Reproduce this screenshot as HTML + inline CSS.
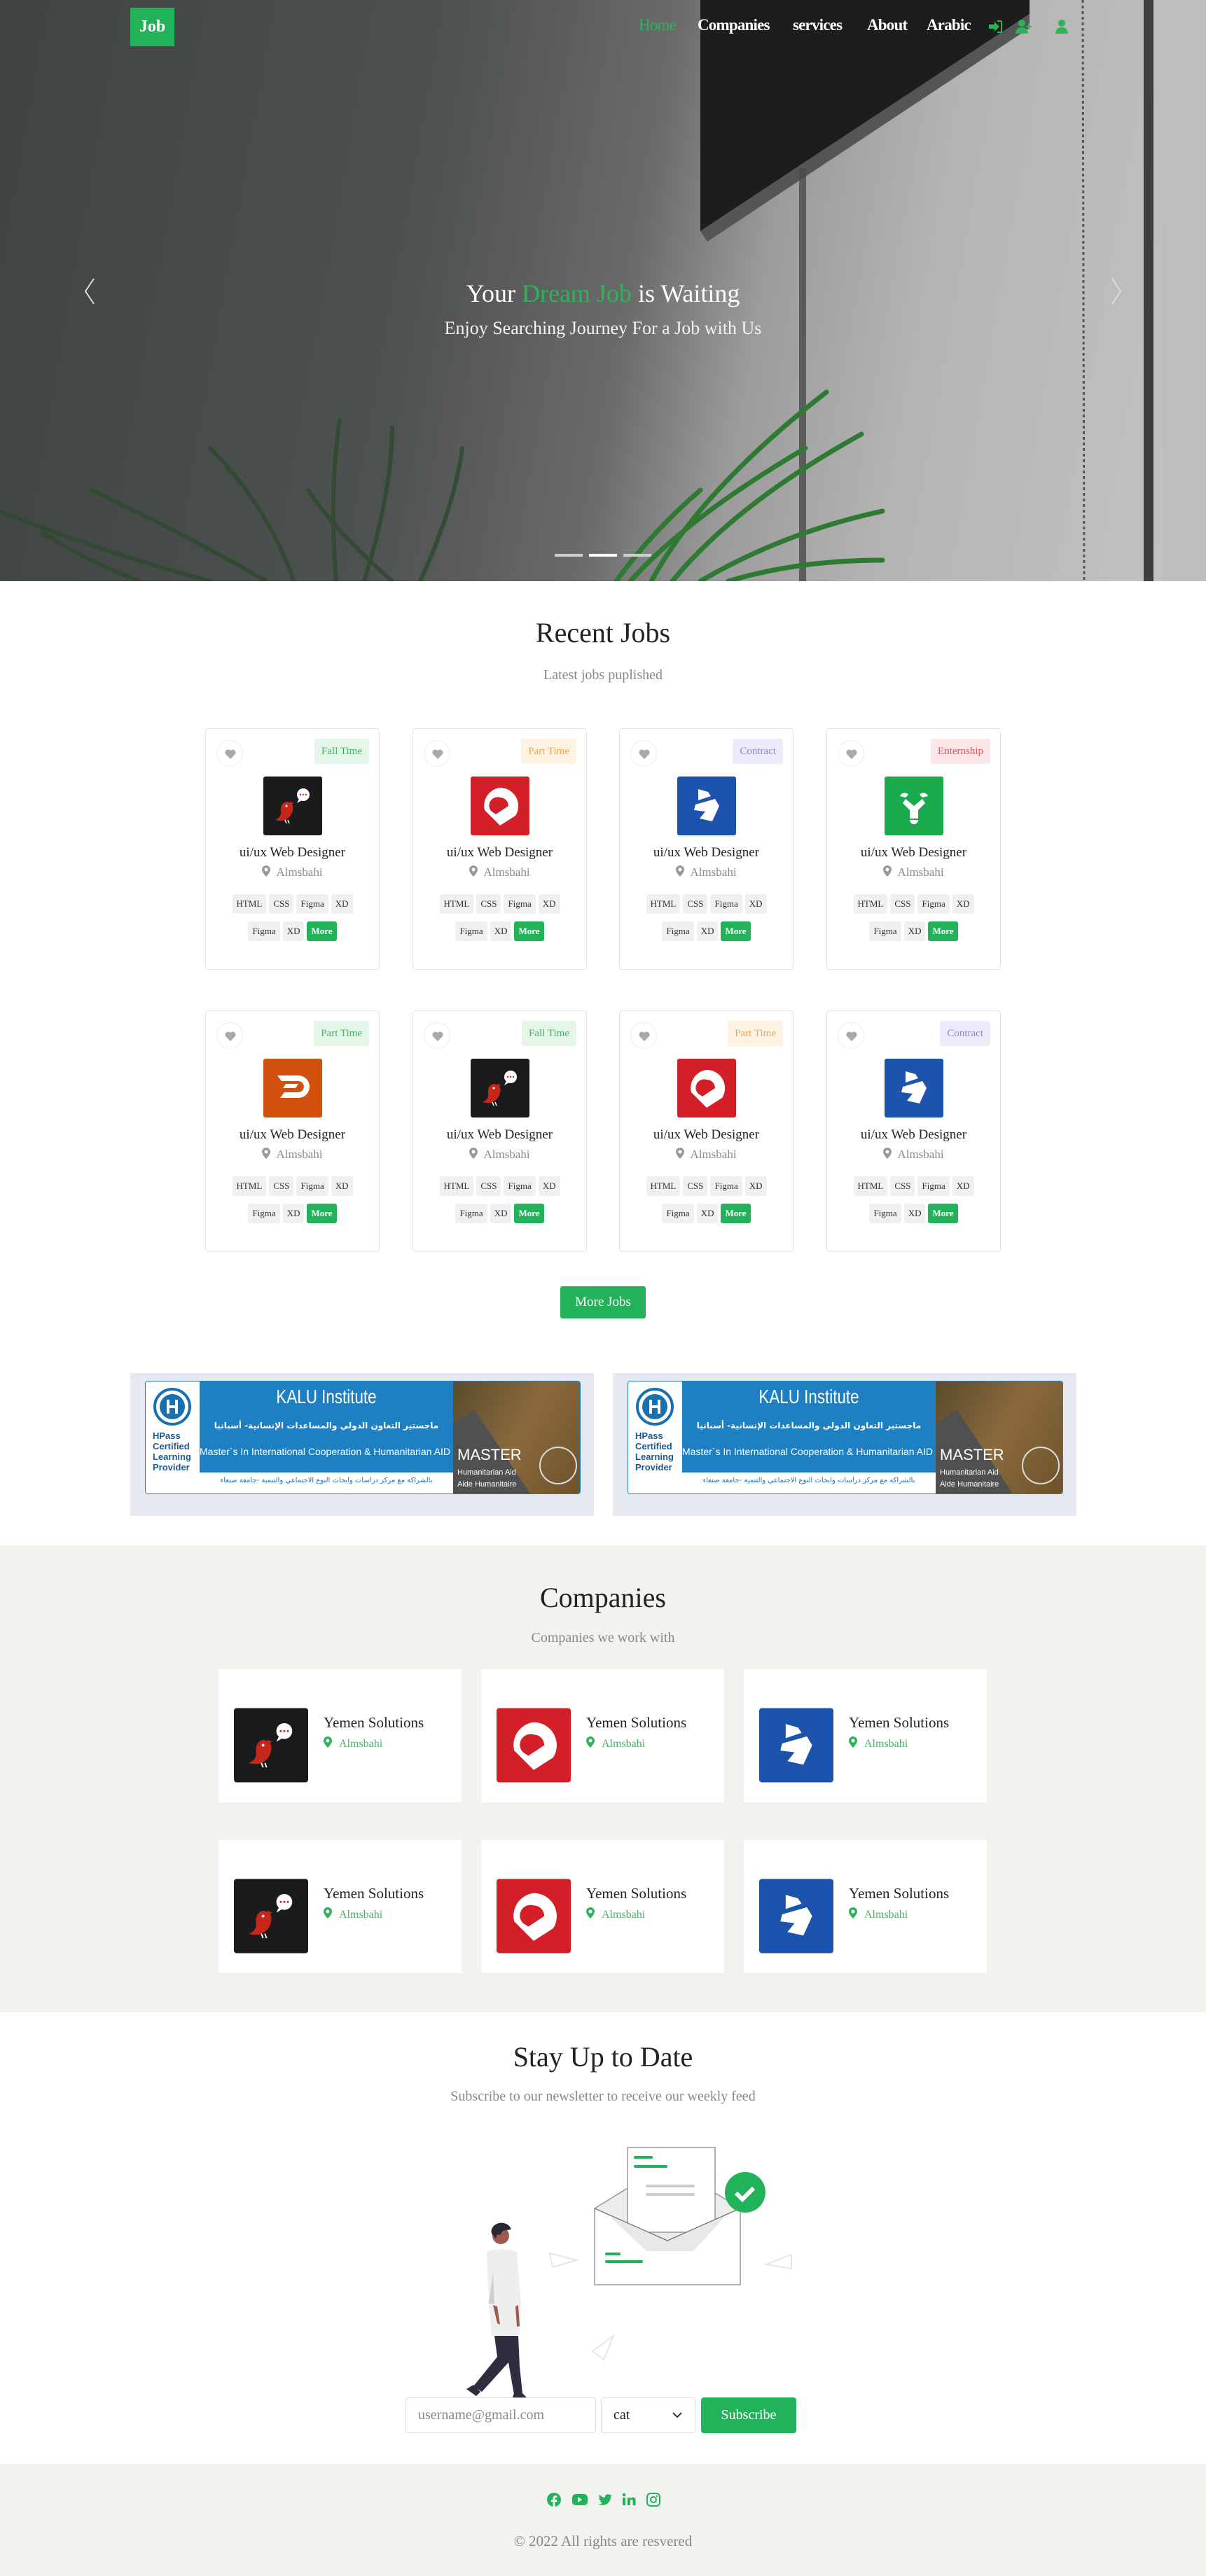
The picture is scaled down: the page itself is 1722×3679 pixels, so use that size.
<!DOCTYPE html>
<html><head><meta charset="utf-8">
<style>
*{box-sizing:border-box;margin:0;padding:0}
body{width:1722px;height:3679px;position:relative;background:#fff;font-family:"Liberation Serif",serif;color:#222;overflow:hidden}
.a{position:absolute}
.hero{left:0;top:0;width:1722px;height:830px;overflow:hidden;background:linear-gradient(100deg,#3f4443 0%,#4d5150 35%,#6a6a6a 52%,#9b9b9b 62%,#b4b4b4 75%,#c4c4c4 100%)}
.nav a{position:absolute;top:23px;font-size:23px;font-weight:bold;color:#fff;text-decoration:none;letter-spacing:-0.8px}
.card{position:absolute;width:249px;height:345px;border:1px solid #e4e4e4;border-radius:4px;background:#fff}
.heart{position:absolute;left:15px;top:16px;width:38px;height:38px;border:1px solid #ececec;border-radius:50%}
.heart svg{position:absolute;left:11px;top:12px}
.badge{position:absolute;right:14px;top:14px;height:36px;line-height:36px;padding:0 10px;font-size:15px;border-radius:3px}
.g{background:#e3f6e8;color:#4cae6a}.o{background:#fff3e3;color:#f0a35a}.p{background:#ecebfb;color:#8b86d0}.r{background:#fde6e8;color:#d45a66}
.lg{position:absolute;left:82px;top:68px;width:84px;height:84px}
.jt{position:absolute;left:0;width:100%;top:166px;text-align:center;font-size:19px;color:#222}
.loc{position:absolute;left:0;width:100%;top:195px;text-align:center;font-size:17px;color:#8a8a8a}
.tags{position:absolute;left:0;width:100%;text-align:center;font-size:13px}
.tags span{display:inline-block;height:28px;line-height:28px;padding:0 6px;background:#eef0f2;color:#333;border-radius:3px;margin:0 2px}
.tags span.m{background:#22b35a;color:#fff;font-weight:bold}
.cc{position:absolute;width:347px;height:190px;background:#fff}
.cc .l{position:absolute;left:22px;top:55px;width:106px;height:107px}
.cc .n{position:absolute;left:150px;top:64px;font-size:21px;color:#222}
.cc .p2{position:absolute;left:150px;top:96px;font-size:16px;color:#4cae6a}
.ad{position:absolute;width:662px;height:204px;background:#e5eaf0}
.ban{position:absolute;left:21px;top:11px;width:622px;height:162px;background:#fff;border-radius:4px;overflow:hidden;border:1px solid #1e7fc2}
.nw{white-space:nowrap}
</style></head><body>

<div class="a hero">
 <svg class="a" style="left:0;top:0" width="1722" height="830">
  <polygon points="1000,0 1470,0 1470,20 1000,330" fill="#1c1d1c"/>
  <polygon points="1000,330 1470,20 1470,40 1010,345" fill="#555"/>
  <rect x="1141" y="240" width="10" height="590" fill="#4a4a4a" opacity=".8"/>
  <line x1="1546" y1="0" x2="1548" y2="830" stroke="#555" stroke-width="3" stroke-dasharray="4 4"/>
  <rect x="1633" y="0" width="14" height="830" fill="#3f3f3f"/>
  <rect x="1660" y="0" width="62" height="830" fill="#bdbdbd"/>
  <g stroke="#2f4a2f" stroke-width="6" fill="none" stroke-linecap="round" opacity=".85">
   <path d="M480 830 Q470 700 485 600"/><path d="M520 830 Q560 700 560 610"/><path d="M420 830 Q380 720 300 640"/>
   <path d="M380 830 Q260 760 130 700"/><path d="M300 830 Q150 790 0 730"/><path d="M600 830 Q650 720 660 640"/>
   <path d="M200 830 Q120 800 60 760"/><path d="M560 830 Q480 760 440 700"/>
  </g>
  <g stroke="#2e7a33" stroke-width="7" fill="none" stroke-linecap="round">
   <path d="M930 830 Q1000 700 1180 560"/><path d="M960 830 Q1050 720 1230 620"/><path d="M900 830 Q980 740 1150 640"/>
   <path d="M1000 830 Q1120 760 1260 730"/><path d="M880 830 Q930 760 1000 700"/><path d="M1040 830 Q1140 800 1260 800"/>
  </g>
 </svg>
 <div class="a" style="left:186px;top:11px;width:63px;height:55px;background:#22b35a;color:#fff;font-size:24px;font-weight:bold;text-align:center;line-height:55px">Job</div>
 <div class="nav">
  <a style="left:912px;color:#2db35a;font-weight:normal">Home</a>
  <a style="left:996px">Companies</a>
  <a style="left:1132px">services</a>
  <a style="left:1238px">About</a>
  <a style="left:1323px">Arabic</a>
 </div>
 <svg class="a" style="left:1410px;top:26px" width="120" height="24" fill="#2db35a">
  <path d="M2 9h8V5l7 7-7 7v-4H2z"/><path d="M14 3h5a2 2 0 0 1 2 2v14a2 2 0 0 1-2 2h-5v-2h5V5h-5z"/>
  <circle cx="49" cy="7" r="5"/><path d="M40 22c0-6 4-9 9-9s9 3 9 9z"/><path d="M58 8h2v3h3v2h-3v3h-2v-3h-3v-2h3z"/>
  <circle cx="106" cy="7" r="5"/><path d="M97 22c0-6 4-9 9-9s9 3 9 9z"/>
 </svg>
 <svg class="a" style="left:118px;top:396px" width="20" height="40"><path d="M16 2 L4 20 L16 38" stroke="#ddd" stroke-width="2" fill="none"/></svg>
 <svg class="a" style="left:1584px;top:396px" width="20" height="40"><path d="M4 2 L16 20 L4 38" stroke="#ddd" stroke-width="2" fill="none"/></svg>
 <div class="a" style="left:0;width:1722px;top:398px;text-align:center;font-size:36px;color:#fff">Your <span style="color:#2db35a">Dream Job</span> is Waiting</div>
 <div class="a" style="left:0;width:1722px;top:454px;text-align:center;font-size:26px;color:#f2f2f2">Enjoy Searching Journey For a Job with Us</div>
 <div class="a" style="left:792px;top:791px;width:40px;height:4px;background:#cfcfcf"></div>
 <div class="a" style="left:841px;top:791px;width:40px;height:4px;background:#fff"></div>
 <div class="a" style="left:890px;top:791px;width:40px;height:4px;background:#cfcfcf"></div>
</div>

<div class="a" style="left:0;width:1722px;top:880px;text-align:center;font-size:40px;color:#222">Recent Jobs</div>
<div class="a" style="left:0;width:1722px;top:953px;text-align:center;font-size:20px;color:#888">Latest jobs puplished</div>

<svg width="0" height="0" style="position:absolute">
 <defs>
  <symbol id="bird" viewBox="0 0 84 84"><rect width="84" height="84" rx="3" fill="#1b1b1d"/><path d="M34 36c-6 0-10 6-9 14 1 6-3 10-8 12 6 2 14 2 20-4 6-6 7-16 3-20z" fill="#c6271a"/><path d="M38 36l6 2-5 2z" fill="#c6271a"/><circle cx="33" cy="42" r="1.5" fill="#fff"/><path d="M31 62l2 5M35 62l2 5" stroke="#fff" stroke-width="1.5"/><circle cx="57" cy="26" r="9" fill="#fff"/><path d="M51 32l-3 6 7-4z" fill="#fff"/><circle cx="53" cy="26" r="1.2" fill="#c6271a"/><circle cx="57" cy="26" r="1.2" fill="#c6271a"/><circle cx="61" cy="26" r="1.2" fill="#c6271a"/></symbol>
  <symbol id="red" viewBox="0 0 84 84"><rect width="84" height="84" rx="3" fill="#d21f28"/><path d="M42 16a26 26 0 0 1 22 40L42 70 20 48a26 26 0 0 1 22-32z" fill="#fff"/><path d="M42 30a12 12 0 0 1 12 12L36 54l-6-4a12 12 0 0 1 12-20z" fill="#d21f28"/></symbol>
  <symbol id="blue" viewBox="0 0 84 84"><rect width="84" height="84" rx="3" fill="#1b53ad"/><path d="M30 18l14 4 4 6-18 6zM26 40l28-8 6 10-10 22-18-4 8-10-16-2z" fill="#fff"/></symbol>
  <symbol id="green" viewBox="0 0 84 84"><rect width="84" height="84" rx="3" fill="#1aaa4e"/><path d="M22 28a7 7 0 0 1 12-2l-4 4zM62 28a7 7 0 0 0-12-2l4 4zM30 32l12 10 12-10 4 6-10 10v12H36V48L26 38z" fill="#fff"/><path d="M36 62h12a6 6 0 0 1-12 0z" fill="#fff"/></symbol>
  <symbol id="orange" viewBox="0 0 84 84"><rect width="84" height="84" rx="3" fill="#d4500f"/><path d="M20 24h30a16 16 0 0 1 0 32H24l6-8h20a8 8 0 0 0 0-16H26zM32 36h18l-4 6H28z" fill="#fff"/></symbol>
  <symbol id="hrt" viewBox="0 0 16 14"><path d="M8 14L1.5 7.5A4 4 0 0 1 8 2a4 4 0 0 1 6.5 5.5z" fill="#a8a8ad"/></symbol>
  <symbol id="pin" viewBox="0 0 12 16"><path d="M6 0a6 6 0 0 1 6 6c0 4-6 10-6 10S0 10 0 6a6 6 0 0 1 6-6zm0 3.5a2.5 2.5 0 1 0 0 5 2.5 2.5 0 0 0 0-5z"/></symbol>
 </defs>
</svg>

<div class="card" style="left:293px;top:1040px"><div class="heart"><svg width="16" height="14"><use href="#hrt"/></svg></div><div class="badge g">Fall Time</div><svg class="lg"><use href="#bird"/></svg><div class="jt">ui/ux Web Designer</div><div class="loc"><svg width="12" height="16" fill="#999" style="vertical-align:-1px;margin-right:8px"><use href="#pin"/></svg>Almsbahi</div><div class="tags" style="top:236px"><span>HTML</span><span>CSS</span><span>Figma</span><span>XD</span></div><div class="tags" style="top:275px"><span>Figma</span><span>XD</span><span class="m">More</span></div></div>
<div class="card" style="left:589px;top:1040px"><div class="heart"><svg width="16" height="14"><use href="#hrt"/></svg></div><div class="badge o">Part Time</div><svg class="lg"><use href="#red"/></svg><div class="jt">ui/ux Web Designer</div><div class="loc"><svg width="12" height="16" fill="#999" style="vertical-align:-1px;margin-right:8px"><use href="#pin"/></svg>Almsbahi</div><div class="tags" style="top:236px"><span>HTML</span><span>CSS</span><span>Figma</span><span>XD</span></div><div class="tags" style="top:275px"><span>Figma</span><span>XD</span><span class="m">More</span></div></div>
<div class="card" style="left:884px;top:1040px"><div class="heart"><svg width="16" height="14"><use href="#hrt"/></svg></div><div class="badge p">Contract</div><svg class="lg"><use href="#blue"/></svg><div class="jt">ui/ux Web Designer</div><div class="loc"><svg width="12" height="16" fill="#999" style="vertical-align:-1px;margin-right:8px"><use href="#pin"/></svg>Almsbahi</div><div class="tags" style="top:236px"><span>HTML</span><span>CSS</span><span>Figma</span><span>XD</span></div><div class="tags" style="top:275px"><span>Figma</span><span>XD</span><span class="m">More</span></div></div>
<div class="card" style="left:1180px;top:1040px"><div class="heart"><svg width="16" height="14"><use href="#hrt"/></svg></div><div class="badge r">Enternship</div><svg class="lg"><use href="#green"/></svg><div class="jt">ui/ux Web Designer</div><div class="loc"><svg width="12" height="16" fill="#999" style="vertical-align:-1px;margin-right:8px"><use href="#pin"/></svg>Almsbahi</div><div class="tags" style="top:236px"><span>HTML</span><span>CSS</span><span>Figma</span><span>XD</span></div><div class="tags" style="top:275px"><span>Figma</span><span>XD</span><span class="m">More</span></div></div>
<div class="card" style="left:293px;top:1443px"><div class="heart"><svg width="16" height="14"><use href="#hrt"/></svg></div><div class="badge g">Part Time</div><svg class="lg"><use href="#orange"/></svg><div class="jt">ui/ux Web Designer</div><div class="loc"><svg width="12" height="16" fill="#999" style="vertical-align:-1px;margin-right:8px"><use href="#pin"/></svg>Almsbahi</div><div class="tags" style="top:236px"><span>HTML</span><span>CSS</span><span>Figma</span><span>XD</span></div><div class="tags" style="top:275px"><span>Figma</span><span>XD</span><span class="m">More</span></div></div>
<div class="card" style="left:589px;top:1443px"><div class="heart"><svg width="16" height="14"><use href="#hrt"/></svg></div><div class="badge g">Fall Time</div><svg class="lg"><use href="#bird"/></svg><div class="jt">ui/ux Web Designer</div><div class="loc"><svg width="12" height="16" fill="#999" style="vertical-align:-1px;margin-right:8px"><use href="#pin"/></svg>Almsbahi</div><div class="tags" style="top:236px"><span>HTML</span><span>CSS</span><span>Figma</span><span>XD</span></div><div class="tags" style="top:275px"><span>Figma</span><span>XD</span><span class="m">More</span></div></div>
<div class="card" style="left:884px;top:1443px"><div class="heart"><svg width="16" height="14"><use href="#hrt"/></svg></div><div class="badge o">Part Time</div><svg class="lg"><use href="#red"/></svg><div class="jt">ui/ux Web Designer</div><div class="loc"><svg width="12" height="16" fill="#999" style="vertical-align:-1px;margin-right:8px"><use href="#pin"/></svg>Almsbahi</div><div class="tags" style="top:236px"><span>HTML</span><span>CSS</span><span>Figma</span><span>XD</span></div><div class="tags" style="top:275px"><span>Figma</span><span>XD</span><span class="m">More</span></div></div>
<div class="card" style="left:1180px;top:1443px"><div class="heart"><svg width="16" height="14"><use href="#hrt"/></svg></div><div class="badge p">Contract</div><svg class="lg"><use href="#blue"/></svg><div class="jt">ui/ux Web Designer</div><div class="loc"><svg width="12" height="16" fill="#999" style="vertical-align:-1px;margin-right:8px"><use href="#pin"/></svg>Almsbahi</div><div class="tags" style="top:236px"><span>HTML</span><span>CSS</span><span>Figma</span><span>XD</span></div><div class="tags" style="top:275px"><span>Figma</span><span>XD</span><span class="m">More</span></div></div>

<div class="a" style="left:800px;top:1837px;width:122px;height:46px;background:#22b35a;border-radius:3px;color:#fff;font-size:19px;text-align:center;line-height:46px">More Jobs</div>

<div class="ad" style="left:186px;top:1961px">
 <div class="ban">
  <div class="a" style="left:0;top:0;width:77px;height:160px;background:#fff">
   <svg class="a" style="left:10px;top:8px" width="56" height="56"><circle cx="28" cy="28" r="25" fill="none" stroke="#1a6fae" stroke-width="4"/><circle cx="28" cy="28" r="18" fill="#1a6fae"/><path d="M22 18v20M34 18v20M22 28h12" stroke="#fff" stroke-width="4"/></svg>
   <div class="a" style="left:10px;top:70px;font:bold 13px/15px 'Liberation Sans',sans-serif;color:#1a5a8e">HPass<br>Certified<br>Learning<br>Provider</div>
  </div>
  <div class="a" style="left:77px;top:0;width:362px;height:130px;background:#1e7fc2;overflow:hidden">
   <div class="a nw" style="left:0;width:362px;top:6px;text-align:center;font:28px 'Liberation Sans Narrow','Liberation Sans',sans-serif;color:#fff;transform:scaleX(.8)">KALU Institute</div>
   <div class="a nw" style="left:0;width:362px;top:56px;text-align:center;font:bold 12px 'DejaVu Sans',sans-serif;color:#fff">ماجستير التعاون الدولي والمساعدات الإنسانية- أسبانيا</div>
   <div class="a nw" style="left:0;width:362px;top:92px;text-align:center;font:14px 'Liberation Sans Narrow','Liberation Sans',sans-serif;color:#fff">Master`s In International Cooperation &amp; Humanitarian AID - Spain</div>
  </div>
  <div class="a nw" style="left:77px;top:136px;width:362px;text-align:center;font:10px 'DejaVu Sans',sans-serif;color:#1e6fb0;overflow:hidden">بالشراكة مع مركز دراسات وابحاث النوع الاجتماعي والتنمية -جامعة صنعاء</div>
  <div class="a" style="left:439px;top:0;width:183px;height:160px;background:linear-gradient(120deg,#5a4a2e,#8a6a3c 50%,#6e522c)">
   <svg class="a" style="left:0;top:0" width="183" height="160"><polygon points="0,60 30,40 110,160 0,160" fill="#505050"/><circle cx="150" cy="120" r="26" fill="none" stroke="#ddd" stroke-width="2"/></svg>
   <div class="a" style="left:6px;top:92px;font:22px 'Liberation Sans Narrow',sans-serif;color:#fff">MASTER</div>
   <div class="a" style="left:6px;top:122px;font:11px/17px 'Liberation Sans Narrow',sans-serif;color:#fff">Humanitarian Aid<br>Aide Humanitaire</div>
  </div>
 </div>
</div>
<div class="ad" style="left:875px;top:1961px">
 <div class="ban">
  <div class="a" style="left:0;top:0;width:77px;height:160px;background:#fff">
   <svg class="a" style="left:10px;top:8px" width="56" height="56"><circle cx="28" cy="28" r="25" fill="none" stroke="#1a6fae" stroke-width="4"/><circle cx="28" cy="28" r="18" fill="#1a6fae"/><path d="M22 18v20M34 18v20M22 28h12" stroke="#fff" stroke-width="4"/></svg>
   <div class="a" style="left:10px;top:70px;font:bold 13px/15px 'Liberation Sans',sans-serif;color:#1a5a8e">HPass<br>Certified<br>Learning<br>Provider</div>
  </div>
  <div class="a" style="left:77px;top:0;width:362px;height:130px;background:#1e7fc2;overflow:hidden">
   <div class="a nw" style="left:0;width:362px;top:6px;text-align:center;font:28px 'Liberation Sans Narrow','Liberation Sans',sans-serif;color:#fff;transform:scaleX(.8)">KALU Institute</div>
   <div class="a nw" style="left:0;width:362px;top:56px;text-align:center;font:bold 12px 'DejaVu Sans',sans-serif;color:#fff">ماجستير التعاون الدولي والمساعدات الإنسانية- أسبانيا</div>
   <div class="a nw" style="left:0;width:362px;top:92px;text-align:center;font:14px 'Liberation Sans Narrow','Liberation Sans',sans-serif;color:#fff">Master`s In International Cooperation &amp; Humanitarian AID - Spain</div>
  </div>
  <div class="a nw" style="left:77px;top:136px;width:362px;text-align:center;font:10px 'DejaVu Sans',sans-serif;color:#1e6fb0;overflow:hidden">بالشراكة مع مركز دراسات وابحاث النوع الاجتماعي والتنمية -جامعة صنعاء</div>
  <div class="a" style="left:439px;top:0;width:183px;height:160px;background:linear-gradient(120deg,#5a4a2e,#8a6a3c 50%,#6e522c)">
   <svg class="a" style="left:0;top:0" width="183" height="160"><polygon points="0,60 30,40 110,160 0,160" fill="#505050"/><circle cx="150" cy="120" r="26" fill="none" stroke="#ddd" stroke-width="2"/></svg>
   <div class="a" style="left:6px;top:92px;font:22px 'Liberation Sans Narrow',sans-serif;color:#fff">MASTER</div>
   <div class="a" style="left:6px;top:122px;font:11px/17px 'Liberation Sans Narrow',sans-serif;color:#fff">Humanitarian Aid<br>Aide Humanitaire</div>
  </div>
 </div>
</div>

<div class="a" style="left:0;top:2207px;width:1722px;height:667px;background:#f2f3ef"></div>
<div class="a" style="left:0;width:1722px;top:2258px;text-align:center;font-size:40px;color:#222">Companies</div>
<div class="a" style="left:0;width:1722px;top:2328px;text-align:center;font-size:20px;color:#888">Companies we work with</div>

<div class="cc" style="left:312px;top:2384px"><svg class="l" viewBox="0 0 84 84"><use href="#bird"/></svg><div class="n">Yemen Solutions</div><div class="p2"><svg width="12" height="16" fill="#2db35a" style="vertical-align:-1px;margin-right:10px"><use href="#pin"/></svg>Almsbahi</div></div>
<div class="cc" style="left:687px;top:2384px"><svg class="l" viewBox="0 0 84 84"><use href="#red"/></svg><div class="n">Yemen Solutions</div><div class="p2"><svg width="12" height="16" fill="#2db35a" style="vertical-align:-1px;margin-right:10px"><use href="#pin"/></svg>Almsbahi</div></div>
<div class="cc" style="left:1062px;top:2384px"><svg class="l" viewBox="0 0 84 84"><use href="#blue"/></svg><div class="n">Yemen Solutions</div><div class="p2"><svg width="12" height="16" fill="#2db35a" style="vertical-align:-1px;margin-right:10px"><use href="#pin"/></svg>Almsbahi</div></div>
<div class="cc" style="left:312px;top:2628px"><svg class="l" viewBox="0 0 84 84"><use href="#bird"/></svg><div class="n">Yemen Solutions</div><div class="p2"><svg width="12" height="16" fill="#2db35a" style="vertical-align:-1px;margin-right:10px"><use href="#pin"/></svg>Almsbahi</div></div>
<div class="cc" style="left:687px;top:2628px"><svg class="l" viewBox="0 0 84 84"><use href="#red"/></svg><div class="n">Yemen Solutions</div><div class="p2"><svg width="12" height="16" fill="#2db35a" style="vertical-align:-1px;margin-right:10px"><use href="#pin"/></svg>Almsbahi</div></div>
<div class="cc" style="left:1062px;top:2628px"><svg class="l" viewBox="0 0 84 84"><use href="#blue"/></svg><div class="n">Yemen Solutions</div><div class="p2"><svg width="12" height="16" fill="#2db35a" style="vertical-align:-1px;margin-right:10px"><use href="#pin"/></svg>Almsbahi</div></div>

<div class="a" style="left:0;width:1722px;top:2914px;text-align:center;font-size:40px;color:#222">Stay Up to Date</div>
<div class="a" style="left:0;width:1722px;top:2983px;text-align:center;font-size:20px;color:#888">Subscribe to our newsletter to receive our weekly feed</div>

<svg class="a" style="left:640px;top:3040px" width="520" height="390">
 <g fill="none" stroke="#e6e6e6" stroke-width="2">
  <path d="M145 178l38 10-34 10z"/><path d="M490 180l-36 14 36 6z"/><path d="M222 330l14-34-30 22z"/>
 </g>
 <polygon points="209,114 313,50 417,114 313,170" fill="#ececec" stroke="#999" stroke-width="1.5"/>
 <rect x="256" y="27" width="125" height="121" fill="#fff" stroke="#999" stroke-width="1.5"/>
 <rect x="265" y="39" width="27" height="4" rx="2" fill="#22b35a"/><rect x="265" y="52" width="48" height="4" rx="2" fill="#22b35a"/>
 <rect x="282" y="80" width="70" height="4" rx="2" fill="#ccc"/><rect x="282" y="92" width="70" height="4" rx="2" fill="#ccc"/>
 <path d="M209 114 L313 160 L417 114 L417 223 L209 223 Z" fill="#fff" stroke="#999" stroke-width="1.5"/>
 <polygon points="230,125 313,161 396,125 350,175 283,175" fill="#e8e8e8"/>
 <path d="M209 114 L313 160 L417 114" fill="none" stroke="#777" stroke-width="1.2"/>
 <rect x="224" y="177" width="22" height="4" rx="2" fill="#22b35a"/><rect x="224" y="188" width="54" height="4" rx="2" fill="#22b35a"/>
 <circle cx="424" cy="91" r="29" fill="#22b35a"/><path d="M411 92l9 9 16-16" stroke="#fff" stroke-width="6" fill="none"/>
 <circle cx="75" cy="153" r="12" fill="#9e5a52"/>
 <path d="M62 150a14 12 0 0 1 28-6l-12 2-4 6-4-1-2 6z" fill="#2a2633"/>
 <path d="M55 176 Q75 168 98 176 L104 250 L102 295 L62 296 L58 250 Z" fill="#eeeeee"/>
 <path d="M58 250 L64 205 L66 250 Z" fill="#cfcfcf"/>
 <path d="M64 252 L70 278 L74 280 L70 254 Z" fill="#9e5a52"/>
 <path d="M100 252 L102 282 L98 283 L96 254 Z" fill="#9e5a52"/>
 <path d="M66 296 L100 296 L102 340 L106 378 L94 380 L86 334 L48 376 L36 368 L70 326 Z" fill="#2f2e41"/>
 <path d="M36 366 L26 372 L40 382 L46 376 Z M94 378 L92 384 L112 384 L106 378 Z" fill="#2f2e41"/>
</svg>

<div class="a" style="left:579px;top:3424px;width:272px;height:51px;border:1px solid #ddd;border-radius:4px;font-size:20px;color:#888;line-height:49px;padding-left:17px">username@gmail.com</div>
<div class="a" style="left:858px;top:3424px;width:135px;height:51px;border:1px solid #ddd;border-radius:4px;font-size:20px;color:#222;line-height:49px;padding-left:17px">cat<svg class="a" style="left:101px;top:20px" width="14" height="9"><path d="M1 1l6 6 6-6" stroke="#333" stroke-width="2" fill="none"/></svg></div>
<div class="a" style="left:1001px;top:3424px;width:136px;height:51px;background:#22b35a;border-radius:4px;font-size:20px;color:#fff;line-height:51px;text-align:center">Subscribe</div>

<div class="a" style="left:0;top:3519px;width:1722px;height:160px;background:#f2f3ef"></div>
<svg class="a" style="left:778px;top:3558px" width="170" height="24" fill="#22b35a">
 <g transform="translate(1,0)"><circle cx="12" cy="12" r="10"/><path d="M13.5 22v-7h2.5l.4-3h-2.9v-1.7c0-.9.3-1.5 1.5-1.5h1.5V6.2c-.3 0-1.2-.1-2.200-.1-2.2 0-3.7 1.3-3.7 3.8V12H8v3h2.6v7z" fill="#f2f3ef"/></g>
 <g transform="translate(39,0)"><rect x="0" y="4" width="22" height="16" rx="5"/><path d="M8 8v8l6-4z" fill="#f2f3ef"/></g>
 <g transform="translate(75,0)"><path d="M21 6c-.7.3-1.5.5-2.3.6.8-.5 1.4-1.3 1.7-2.2-.8.5-1.600.8-2.5 1a4 4 0 0 0-6.8 3.6A11.3 11.3 0 0 1 2.9 4.8a4 4 0 0 0 1.2 5.3c-.6 0-1.3-.2-1.8-.5 0 1.9 1.4 3.6 3.2 3.9-.6.2-1.2.2-1.8.1.5 1.6 2 2.7 3.7 2.8A8 8 0 0 1 1.5 18a11.3 11.3 0 0 0 17.4-10z"/></g>
 <g transform="translate(111,0)"><rect x="0" y="9" width="4" height="11"/><circle cx="2" cy="5" r="2.3"/><path d="M7 9h3.8v1.6c.6-1 1.9-1.9 3.8-1.9 3.4 0 4 2.2 4 5V20h-4v-5.3c0-1.3 0-2.8-1.7-2.8s-2 1.3-2 2.7V20h-4z"/></g>
 <g transform="translate(145,0)"><rect x="1" y="3" width="18" height="18" rx="5" fill="none" stroke="#22b35a" stroke-width="2"/><circle cx="10" cy="12" r="4" fill="none" stroke="#22b35a" stroke-width="2"/><circle cx="15" cy="7" r="1.2"/></g>
</svg>
<div class="a" style="left:0;width:1722px;top:3617px;text-align:center;font-size:21px;color:#888">© 2022 All rights are resvered</div>
</body></html>
